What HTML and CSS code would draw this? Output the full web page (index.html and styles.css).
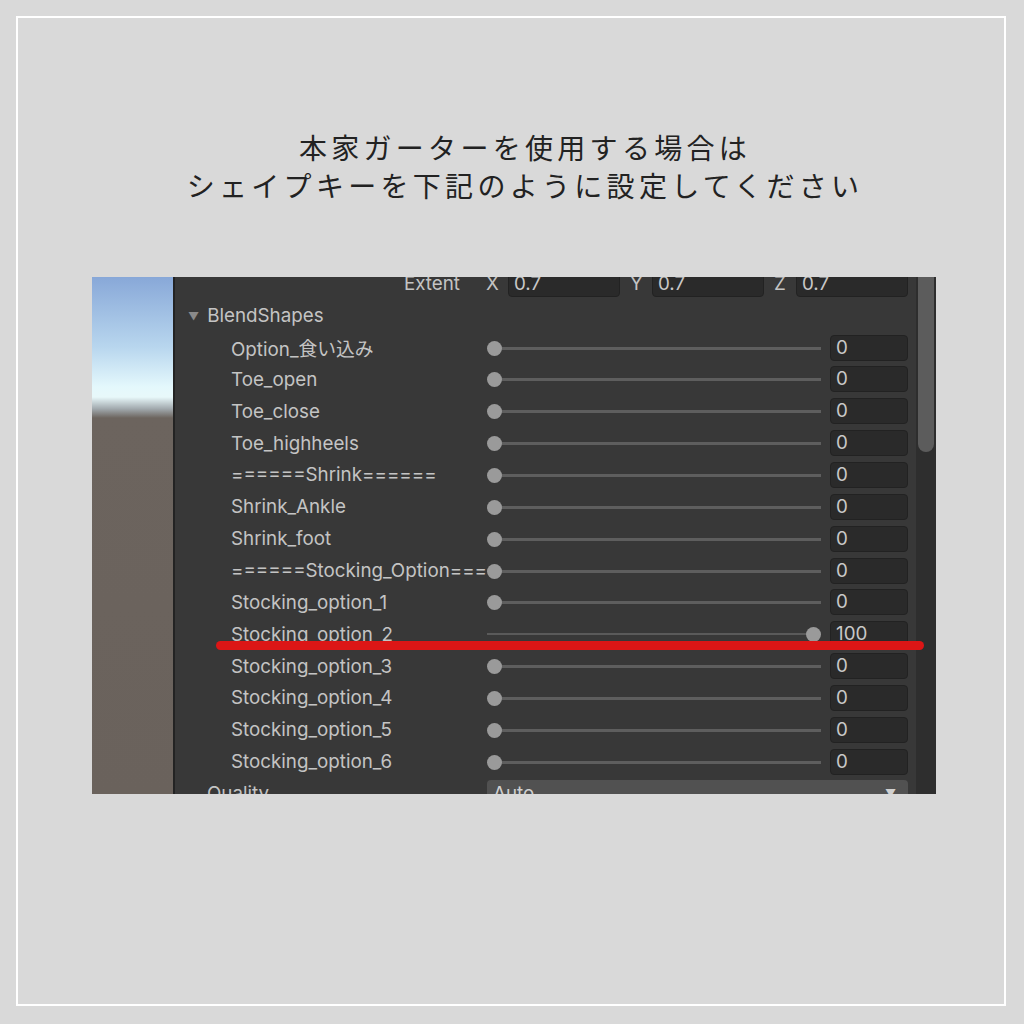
FILE: index.html
```html
<!DOCTYPE html>
<html lang="ja">
<head>
  <meta charset="UTF-8">
  <title>BlendShapes</title>
  <link rel="stylesheet" href="styles.css">
</head>
<body>
  <div class="frame">
    <h1 class="title">本家ガーターを使用する場合は<br>シェイプキーを下記のように設定してください</h1>

    <div class="shot">
      <div class="sky"></div>
      <div class="inspector">
        <div class="rows">
          <div class="row extent">
            <span class="ext-label">Extent</span>
            <div class="vec">
              <span class="axis">X</span><span class="field">0.7</span>
              <span class="axis">Y</span><span class="field">0.7</span>
              <span class="axis">Z</span><span class="field">0.7</span>
            </div>
          </div>
          <div class="row">
            <span class="fold">&#9660;</span><span class="group">BlendShapes</span>
          </div>
          <div class="row shape"><span class="label">Option_食い込み</span><div class="slider"><span class="knob"></span></div><span class="field">0</span></div>
          <div class="row shape"><span class="label">Toe_open</span><div class="slider"><span class="knob"></span></div><span class="field">0</span></div>
          <div class="row shape"><span class="label">Toe_close</span><div class="slider"><span class="knob"></span></div><span class="field">0</span></div>
          <div class="row shape"><span class="label">Toe_highheels</span><div class="slider"><span class="knob"></span></div><span class="field">0</span></div>
          <div class="row shape"><span class="label">======Shrink======</span><div class="slider"><span class="knob"></span></div><span class="field">0</span></div>
          <div class="row shape"><span class="label">Shrink_Ankle</span><div class="slider"><span class="knob"></span></div><span class="field">0</span></div>
          <div class="row shape"><span class="label">Shrink_foot</span><div class="slider"><span class="knob"></span></div><span class="field">0</span></div>
          <div class="row shape"><span class="label">======Stocking_Option======</span><div class="slider"><span class="knob"></span></div><span class="field">0</span></div>
          <div class="row shape"><span class="label">Stocking_option_1</span><div class="slider"><span class="knob"></span></div><span class="field">0</span></div>
          <div class="row shape"><span class="label">Stocking_option_2</span><div class="slider full"><span class="knob"></span></div><span class="field">100</span></div>
          <div class="row shape"><span class="label">Stocking_option_3</span><div class="slider"><span class="knob"></span></div><span class="field">0</span></div>
          <div class="row shape"><span class="label">Stocking_option_4</span><div class="slider"><span class="knob"></span></div><span class="field">0</span></div>
          <div class="row shape"><span class="label">Stocking_option_5</span><div class="slider"><span class="knob"></span></div><span class="field">0</span></div>
          <div class="row shape"><span class="label">Stocking_option_6</span><div class="slider"><span class="knob"></span></div><span class="field">0</span></div>
          <div class="row quality">
            <span class="group">Quality</span>
            <div class="dropdown"><span>Auto</span><span class="arrow">&#9660;</span></div>
          </div>
        </div>
      </div>
      <div class="scrollbar"><div class="thumb"></div></div>
      <div class="marker"></div>
    </div>
  </div>
</body>
</html>
```

FILE: styles.css
```css
body {
  margin: 0;
  background: #d9d9d9;
}

.frame {
  box-sizing: border-box;
  width: 990px;
  height: 990px;
  margin: 16px;
  border: 2px solid #ffffff;
  display: flex;
  flex-direction: column;
}

/* title */

.title {
  margin: 110px 0 0 0;
  padding-left: 28px;
  text-align: center;
  font-family: "Noto Sans CJK JP", sans-serif;
  font-weight: 400;
  font-size: 28px;
  line-height: 38px;
  letter-spacing: 4.3px;
  color: #222222;
}

/* unity screenshot */

.shot {
  position: relative;
  display: flex;
  width: 844px;
  height: 517px;
  margin: 73px 0 0 74px;
  font-family: Inter, "Noto Sans CJK JP", sans-serif;
  font-size: 18.8px;
  color: #c4c4c4;
}

.sky {
  width: 81px;
  flex-shrink: 0;
  background: linear-gradient(to bottom, #88a8d8 0px, #b8d6ee 70px, #e4f8fc 110px, #e8f8fa 120px, #a0a8ac 132px, #6c645e 141px, #6a625c 517px);
}

.inspector {
  flex: 1;
  background: #383838;
  border-left: 2px solid #232323;
  overflow: hidden;
}

.rows {
  margin-top: -9px;
}

.row {
  display: flex;
  align-items: center;
  height: 31.85px;
}

.extent .ext-label {
  width: 288px;
  text-align: right;
}

.vec {
  display: flex;
  align-items: center;
  margin-left: 24px;
}

.axis {
  width: 24px;
  padding-left: 2px;
  box-sizing: border-box;
}

.vec .field {
  width: 112px;
  margin-right: 8px;
}

.fold {
  font-size: 11px;
  color: #8a8a8a;
  margin: 0 8px 0 13px;
}

.quality .group {
  width: 312px;
  padding-left: 32px;
  box-sizing: border-box;
}

.label {
  width: 312px;
  padding-left: 56px;
  box-sizing: border-box;
  white-space: nowrap;
  overflow: hidden;
}

.slider {
  position: relative;
  width: 335px;
  height: 16px;
  margin-right: 8px;
}

.slider::before {
  content: "";
  position: absolute;
  left: 7px;
  right: 1px;
  top: 7px;
  height: 3px;
  background: #5e5e5e;
}

.slider.full::before {
  left: 0;
  right: 9px;
  height: 2px;
  background: #5a5a5a;
}

.knob {
  position: absolute;
  left: 0;
  top: 1px;
  width: 15px;
  height: 15px;
  border-radius: 50%;
  background: #9a9a9a;
}

.slider.full .knob {
  left: 319px;
}

.field {
  box-sizing: border-box;
  width: 78px;
  height: 26px;
  padding-left: 5px;
  line-height: 24px;
  background: #2a2a2a;
  border: 1px solid #222222;
  border-radius: 4px;
  color: #c8c8c8;
}

.dropdown {
  display: flex;
  justify-content: space-between;
  align-items: center;
  box-sizing: border-box;
  width: 421px;
  height: 26px;
  padding: 0 12px 0 6px;
  background: #515151;
  border-radius: 4px;
  color: #d0d0d0;
}

.arrow {
  font-size: 11px;
}

/* red highlight over the row */

.marker {
  position: absolute;
  left: 124px;
  top: 364px;
  width: 708px;
  height: 9px;
  border-radius: 5px;
  background: #dc1616;
}

.scrollbar {
  width: 20px;
  flex-shrink: 0;
  background: #2e2e2e;
  position: relative;
}

.thumb {
  position: absolute;
  left: 2px;
  top: 0;
  width: 16px;
  height: 175px;
  background: #5c5c5c;
  border-radius: 0 0 8px 8px;
}
```
